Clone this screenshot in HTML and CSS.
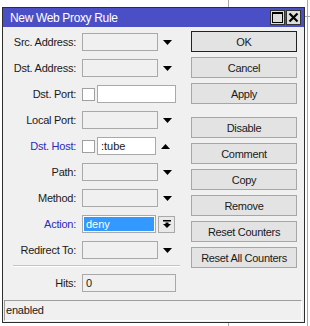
FILE: index.html
```html
<!DOCTYPE html>
<html lang="en">
<head>
<meta charset="UTF-8">
<title>New Web Proxy Rule</title>
<link rel="stylesheet" href="styles.css">
</head>
<body>
<div class="desk">
    <div class="bg-line v1"></div>
    <div class="bg-line v2"></div>
    <div class="bg-line h1"></div>

    <div class="window">
        <div class="titlebar">
            <span class="title">New Web Proxy Rule</span>
            <div class="tb-buttons">
                <span class="tb-btn"><svg width="11" height="11" viewBox="0 0 11 11"><rect x="0.5" y="0.5" width="10" height="10" fill="none" stroke="#000"/><rect x="0" y="0" width="11" height="2" fill="#000"/></svg></span>
                <span class="tb-btn"><svg width="11" height="11" viewBox="0 0 11 11"><path d="M1.5 1.5 L9.5 9.5 M9.5 1.5 L1.5 9.5" stroke="#000" stroke-width="2.2"/></svg></span>
            </div>
        </div>

        <div class="content">
            <div class="form">
                <div class="row">
                    <label>Src. Address:</label>
                    <span class="field dis w76"></span>
                    <span class="arrow"><svg width="9" height="5" viewBox="0 0 9 5"><path d="M0 0 H9 L4.5 5 Z"/></svg></span>
                </div>
                <div class="row">
                    <label>Dst. Address:</label>
                    <span class="field dis w76"></span>
                    <span class="arrow"><svg width="9" height="5" viewBox="0 0 9 5"><path d="M0 0 H9 L4.5 5 Z"/></svg></span>
                </div>
                <div class="row">
                    <label>Dst. Port:</label>
                    <span class="check"></span>
                    <span class="field w79"></span>
                </div>
                <div class="row">
                    <label>Local Port:</label>
                    <span class="field dis w76"></span>
                    <span class="arrow"><svg width="9" height="5" viewBox="0 0 9 5"><path d="M0 0 H9 L4.5 5 Z"/></svg></span>
                </div>
                <div class="row">
                    <label class="blue">Dst. Host:</label>
                    <span class="check"></span>
                    <span class="field w59">:tube</span>
                    <span class="arrow up"><svg width="9" height="5" viewBox="0 0 9 5"><path d="M0 5 H9 L4.5 0 Z"/></svg></span>
                </div>
                <div class="row">
                    <label>Path:</label>
                    <span class="field dis w76"></span>
                    <span class="arrow"><svg width="9" height="5" viewBox="0 0 9 5"><path d="M0 0 H9 L4.5 5 Z"/></svg></span>
                </div>
                <div class="row">
                    <label>Method:</label>
                    <span class="field dis w76"></span>
                    <span class="arrow"><svg width="9" height="5" viewBox="0 0 9 5"><path d="M0 0 H9 L4.5 5 Z"/></svg></span>
                </div>
                <div class="row">
                    <label class="blue">Action:</label>
                    <span class="field sel w74"><span class="hl">deny</span></span>
                    <span class="dd-btn"><svg width="8" height="8" viewBox="0 0 8 8"><rect x="0" y="0" width="8" height="1.5"/><path d="M2.5 2.5 H5.5 V4 H8 L4 8 L0 4 H2.5 Z"/></svg></span>
                </div>
                <div class="row">
                    <label>Redirect To:</label>
                    <span class="field dis w76"></span>
                    <span class="arrow"><svg width="9" height="5" viewBox="0 0 9 5"><path d="M0 0 H9 L4.5 5 Z"/></svg></span>
                </div>
                <div class="sep"></div>
                <div class="row">
                    <label>Hits:</label>
                    <span class="field dis w94">0</span>
                </div>
            </div>

            <div class="buttons">
                <button class="default">OK</button>
                <button>Cancel</button>
                <button>Apply</button>
                <button class="group">Disable</button>
                <button>Comment</button>
                <button>Copy</button>
                <button>Remove</button>
                <button>Reset Counters</button>
                <button>Reset All Counters</button>
            </div>
        </div>

        <div class="status">enabled</div>
    </div>
</div>
</body>
</html>
```

FILE: styles.css
```css
body { margin: 0; background: #ffffff;
    font-family: "Liberation Sans", Arial, sans-serif; font-size: 11px;
    color: #1a1a1a;
}
.desk { position: relative; width: 310px; height: 326px; overflow: hidden;
    padding: 7px 0 0 2px; box-sizing: border-box;
}
.bg-line { position: absolute; background: #a8a8a8; }
.bg-line.v1 { left: 228px; top: 0; width: 1px; height: 326px; }
.bg-line.v2 { left: 307px; top: 0; width: 1px; height: 326px; }
.bg-line.h1 { left: 304px; top: 16px; width: 6px; height: 1px; }

.window { position: relative; width: 303px; height: 316px; box-sizing: border-box;
    border: 1px solid #2e2e2e; background: #f0f0f0;
    display: flex; flex-direction: column;
}
.titlebar { height: 19px; background: #4b4fc6; display: flex;
    align-items: center; justify-content: space-between; padding: 0 3px 0 7px;
}
.title { color: #fff; font-size: 12px; letter-spacing: -0.35px; }
.tb-buttons { display: flex; gap: 1px; }
.tb-btn { width: 13px; height: 13px; background: #dcdcdc; border: 1px solid #333;
    display: flex; align-items: center; justify-content: center;
}

.content { display: flex; padding-top: 6px; height: 266px; }
.form { width: 185px; display: flex; flex-direction: column; gap: 8px; }
.row { display: flex; align-items: center; height: 18px; }
.row label { width: 73px; text-align: right; margin-right: 6px;
    letter-spacing: -0.25px; white-space: nowrap;
}
.row label.blue { color: #2b2bb8; }
.field { height: 18px; box-sizing: border-box; border: 1px solid #a9a9a9;
    background: #fff; padding: 0 3px; line-height: 16px;
}
.field.dis { background: #f0f0f0; }
.w76 { width: 76px; } .w79 { width: 79px; } .w59 { width: 59px; }
.w74 { width: 74px; } .w94 { width: 94px; }
.field.sel { background: #fff; padding: 1px; }
.field.sel .hl { display: block; height: 14px; background: #3399ff; color: #fff;
    line-height: 14px; padding-left: 2px;
}
.check { width: 13px; height: 13px; box-sizing: border-box; border: 1px solid #a0a0a0;
    background: #fff; margin-right: 2px;
}
.arrow { margin-left: 5px; display: flex; }
.dd-btn { width: 17px; height: 17px; box-sizing: border-box; margin-left: 2px;
    border: 1px solid #a9a9a9; background: #e9e9e9;
    display: flex; align-items: center; justify-content: center;
}
.sep { height: 1px; background: #c4c4c4; border-bottom: 1px solid #fff;
    margin: -2px 8px -1px 10px;
}

.buttons { display: flex; flex-direction: column; gap: 5px; margin-top: -2px; margin-left: 3px; }
.buttons button { width: 106px; height: 21px; box-sizing: border-box; padding: 0;
    font-family: "Liberation Sans", Arial, sans-serif; font-size: 11px;
    letter-spacing: -0.3px; color: #1a1a1a;
    background: #e3e3e3; border: 1px solid #a6a6a6;
}
.buttons button.default { border: 1px solid #222; }
.buttons button.group { margin-top: 8px; }

.status { margin: auto 2px 1px 1px; height: 21px; box-sizing: border-box;
    border-top: 1px solid #9d9d9d; border-left: 1px solid #9d9d9d;
    border-right: 1px solid #fff; border-bottom: 1px solid #fff;
    padding-left: 1px; line-height: 19px; letter-spacing: -0.2px;
}
```
